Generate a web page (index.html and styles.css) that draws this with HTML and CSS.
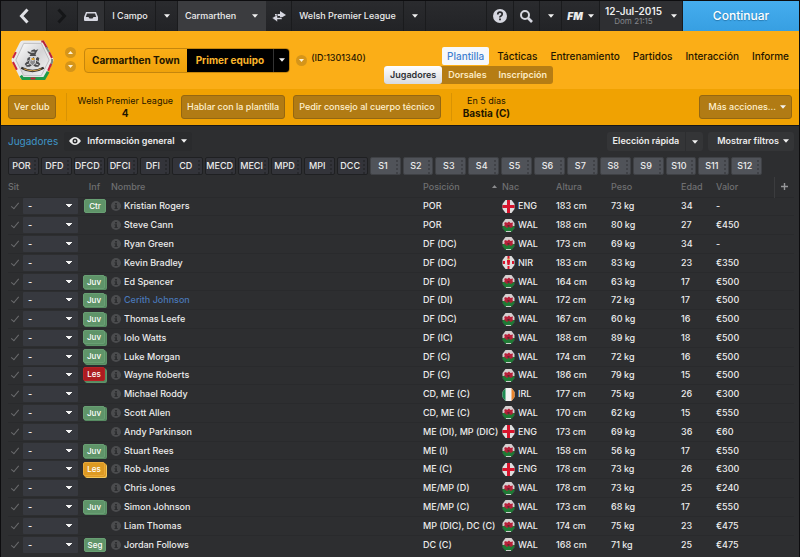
FILE: index.html
```html
<!DOCTYPE html>
<html lang="es">
<head>
    <meta charset="UTF-8">
    <meta name="viewport" content="width=device-width, initial-scale=1.0">
    <title>Carmarthen Town</title>
    <link rel="stylesheet" href="styles.css">
</head>
<body>
    <svg class="sprites" aria-hidden="true">
        <clipPath id="hex"><path d="M3.500 0h6l3 4v5l-3 4h-6l-3-4V4z"/></clipPath>
        <symbol id="caret" viewBox="0 0 7 4"><path d="M0 0h7L3.500 4z" fill="currentColor"/></symbol>
        <symbol id="info" viewBox="0 0 10 10">
            <circle cx="5" cy="5" r="5" fill="#4b4c4e"/>
            <path d="M4 2h2v1.500H4zM3.500 4.300H6V7h.7v1H3.500V7h.7V5.200h-.7z" fill="#2c2d2f"/>
        </symbol>
        <symbol id="ENG" viewBox="0 0 13 13">
            <g clip-path="url(#hex)">
                <path d="M0 0h13v13H0z" fill="#dedede"/>
                <path d="M5 0h3v5h5v3H8v5H5V8H0V5h5z" fill="#d8142c"/>
            </g>
        </symbol>
        <symbol id="NIR" viewBox="0 0 13 13">
            <g clip-path="url(#hex)">
                <path d="M0 0h13v13H0z" fill="#dedede"/>
                <path d="M5.500 0h2v3h-2zM5.500 10h2v3h-2zM1 5h2v3H1zM10 5h2v3h-2z" fill="#d8142c"/>
                <path d="M5 4h3v2l-.5 3h-2L5 6z" fill="#d8142c"/>
                <path d="M5.500 2.500h2V4h-2z" fill="#d9a441"/>
            </g>
        </symbol>
        <symbol id="WAL" viewBox="0 0 13 13">
            <g clip-path="url(#hex)">
                <path d="M0 0h13v7H0z" fill="#d5d0d0"/>
                <path d="M0 7h13v6H0z" fill="#1f7a35"/>
                <path d="M0 9l3 4H0zM13 9l-3 4h3zM4 12h5v1H4z" fill="#c9cfca"/>
                <path d="M2 4l2-1 1 1 2-1.500L8.500 4 11 3.500 10.500 6l1 2-2-.5.500 1.500-2-.5-1-1-2 1.500-1-.5.500-1-2 .5L3 7 1.500 6 3 5.500z" fill="#b81f38"/>
                <path d="M5 6.500l2-.500 1 1-2 1z" fill="#5e2330"/>
            </g>
        </symbol>
        <symbol id="IRL" viewBox="0 0 13 13">
            <g clip-path="url(#hex)">
                <path d="M0 0h13v13H0z" fill="#f2f2f2"/>
                <path d="M0 0h3.500v13H0z" fill="#1c8a50"/>
                <path d="M9.500 0H13v13H9.500z" fill="#e8842c"/>
            </g>
        </symbol>
    </svg>

    <nav class="topbar">
        <button class="cell back" aria-label="Atrás"><svg width="10" height="16" viewBox="0 0 10 16"><path d="M8.500 1.500L2.500 8l6 6.500" fill="none" stroke="#e0e1e6" stroke-width="3"/></svg></button>
        <button class="cell forward" aria-label="Adelante"><svg width="10" height="16" viewBox="0 0 10 16"><path d="M1.500 1.500l6 6.500-6 6.500" fill="none" stroke="#151618" stroke-width="3"/></svg></button>
        <button class="cell inbox" aria-label="Bandeja"><svg width="14" height="9" viewBox="0 0 14 9"><path d="M2 0h10l2 5v3q0 1-1 1H1Q0 9 0 8V5zM3 1.500L1.800 5H4.500l1 1.500h3l1-1.500h2.700L11 1.500z" fill="#d6d7e0" fill-rule="evenodd"/></svg></button>
        <a class="cell campo" href="#">I Campo</a>
        <button class="cell drop" aria-label="Menú Campo"><svg class="caret"><use href="#caret"/></svg></button>
        <a class="cell team active" href="#">Carmarthen</a>
        <button class="cell drop active" aria-label="Menú Carmarthen"><svg class="caret"><use href="#caret"/></svg></button>
        <button class="cell swap" aria-label="Cambiar"><svg width="14" height="11" viewBox="0 0 14 11"><path d="M8 0l6 4-6 3.500V5H3V3h5z" fill="#d6d7e0"/><path d="M5.500 3.500L0 7l5.500 4V8.500H10v-2H5.500z" fill="#d6d7e0" stroke="#26272a" stroke-width=".6"/></svg></button>
        <a class="cell league" href="#">Welsh Premier League</a>
        <button class="cell drop" aria-label="Menú liga"><svg class="caret"><use href="#caret"/></svg></button>
        <div class="space"></div>
        <button class="cell help" aria-label="Ayuda"><svg width="14" height="14" viewBox="0 0 14 14"><circle cx="7" cy="7" r="7" fill="#d6d7e0"/><path d="M4.800 5.400Q4.800 3.200 7 3.200t2.200 1.900Q9.200 6.300 8 7T7 8.500" fill="none" stroke="#26272a" stroke-width="1.700"/><path d="M6.100 9.600h1.800v1.700H6.100z" fill="#26272a"/></svg></button>
        <button class="cell search" aria-label="Buscar"><svg width="13" height="13" viewBox="0 0 13 13"><circle cx="5" cy="5" r="4" fill="none" stroke="#d6d7e0" stroke-width="2"/><path d="M8 8l4 4" stroke="#d6d7e0" stroke-width="2.600"/></svg></button>
        <button class="cell drop" aria-label="Opciones de búsqueda"><svg class="caret"><use href="#caret"/></svg></button>
        <button class="cell fm"><b>FM</b><svg class="caret"><use href="#caret"/></svg></button>
        <button class="cell date"><span><strong>12-Jul-2015</strong><small>Dom 21:15</small></span><svg class="caret"><use href="#caret"/></svg></button>
        <button class="continue">Continuar</button>
    </nav>

    <header class="club">
        <svg class="crest" viewBox="0 0 44 42" role="img" aria-label="Escudo">
            <defs>
                <linearGradient id="silver" x1="0" y1="0" x2="1" y2="1">
                    <stop offset="0" stop-color="#fff"/><stop offset=".5" stop-color="#d4d4d6"/><stop offset="1" stop-color="#f6f6f6"/>
                </linearGradient>
            </defs>
            <path d="M12 1h20q2 0 3 2l8 16q1 2 0 4l-8 16q-1 2-3 2H12q-2 0-3-2L1 23q-1-2 0-4L9 3q1-2 3-2z" fill="#e9e9ea"/>
            <path d="M31 2h2l4 7M39 13l3 6" stroke="#b5213a" stroke-width="2" fill="none"/>
            <path d="M36 8l3 5M42 20v3l-2 5" stroke="#7d8a7f" stroke-width="2" fill="none"/>
            <path d="M38 33l-4 7H12l-2-3" stroke="#1f9a4a" stroke-width="3" fill="none"/>
            <path d="M38 32l3-7M20 40h5M2 23l4 8M2 19l3-6" stroke="#c8233c" stroke-width="2" fill="none"/>
            <path d="M13 4h18l8 17-8 16H13L5 21z" fill="url(#silver)" stroke="#bdbdbf"/>
            <path d="M17 12l3 1 1-2 3-1 1 1 3-1-2 3-1 3 1 1h-7l1-2-2-1-1-1z" fill="#4b4b4d"/>
            <path d="M17 19l2-1 2 2 2-2 2 2 2-2 2 1-1 4 2 2-2 3h-3l-3-2-3 2h-3l-2-3 2-2z" fill="#4a4a4d"/>
            <path d="M20 19l2 3 3-3v5l-3 3-3-3zM16 23l2-2M28 23l-2-2M20 13h4M16 26l3-1M28 26l-3-1" stroke="#e5e5e5" fill="#8b8b8e"/>
            <path d="M21 19h3v2h-3z" fill="#e2a32c"/>
            <path d="M11 28q11 6 22 0l1 2q-12 7-24 0z" fill="#2e2d2b"/>
            <path d="M13 30q9 4 18 0" stroke="#d6a046" fill="none"/>
        </svg>
        <div class="steppers">
            <button aria-label="Equipo anterior"><svg class="up"><use href="#caret"/></svg></button>
            <button aria-label="Equipo siguiente"><svg><use href="#caret"/></svg></button>
        </div>
        <div class="title">
            <h1>Carmarthen Town</h1>
            <button class="squad">Primer equipo</button>
            <button class="squad-menu" aria-label="Elegir equipo"><svg class="caret"><use href="#caret"/></svg></button>
        </div>
        <div class="steppers single"><button aria-label="Más"><svg><use href="#caret"/></svg></button></div>
        <span class="club-id">(ID:1301340)</span>
        <div class="menus">
            <nav class="tabs">
                <a class="selected" href="#">Plantilla</a>
                <a href="#">Tácticas</a>
                <a href="#">Entrenamiento</a>
                <a href="#">Partidos</a>
                <a href="#">Interacción</a>
                <a href="#">Informe</a>
            </nav>
            <nav class="subtabs">
                <a class="selected" href="#">Jugadores</a>
                <a href="#">Dorsales</a>
                <a href="#">Inscripción</a>
            </nav>
        </div>
    </header>

    <section class="actions">
        <button>Ver club</button>
        <div class="fact"><span>Welsh Premier League</span><strong>4</strong></div>
        <button>Hablar con la plantilla</button>
        <button>Pedir consejo al cuerpo técnico</button>
        <div class="fact"><span>En 5 días</span><strong>Bastia (C)</strong></div>
        <button class="more">Más acciones...<svg class="caret"><use href="#caret"/></svg></button>
    </section>

    <main>
        <div class="toolbar">
            <h2>Jugadores</h2>
            <button class="view">
                <svg width="12" height="8" viewBox="0 0 12 8"><path d="M0 4q6-8 12 0-6 8-12 0z" fill="#ececec"/><circle cx="6" cy="4" r="2.500" fill="#2b2c2e"/><circle cx="6" cy="4" r="1" fill="#ececec"/></svg>
                Información general
                <svg class="caret"><use href="#caret"/></svg>
            </button>
            <div class="quick">
                <button>Elección rápida</button>
                <button class="quick-menu" aria-label="Opciones de elección"><svg class="caret"><use href="#caret"/></svg></button>
            </div>
            <button class="filters">Mostrar filtros<svg class="caret"><use href="#caret"/></svg></button>
        </div>

        <div class="slots" id="slots"></div>

        <table>
            <colgroup>
                <col class="c-tick"><col class="c-pick"><col class="c-inf"><col><col class="c-pos"><col class="c-nac">
                <col class="c-height"><col class="c-weight"><col class="c-age"><col class="c-value"><col class="c-add">
            </colgroup>
            <thead>
                <tr>
                    <th colspan="2">Sit</th>
                    <th class="inf">Inf</th>
                    <th>Nombre</th>
                    <th class="sorted"><div>Posición<svg class="up"><use href="#caret"/></svg></div></th>
                    <th>Nac</th>
                    <th>Altura</th>
                    <th>Peso</th>
                    <th>Edad</th>
                    <th>Valor</th>
                    <th class="add"><button aria-label="Añadir columna"><svg width="7" height="7" viewBox="0 0 7 7"><path d="M3.500 0v7M0 3.500h7" stroke="#97989a" stroke-width="1.400"/></svg></button></th>
                </tr>
            </thead>
            <tbody id="players"></tbody>
        </table>
    </main>

    <script>
        const positions = ['POR', 'DFD', 'DFCD', 'DFCI', 'DFI', 'CD', 'MECD', 'MECI', 'MPD', 'MPI', 'DCC'];
        const subs = ['S1', 'S2', 'S3', 'S4', 'S5', 'S6', 'S7', 'S8', 'S9', 'S10', 'S11', 'S12'];

        // badge text, badge classes, name, position, nation, height, weight, age, value
        const players = [
            ['Ctr', '', 'Kristian Rogers', 'POR', 'ENG', 183, 73, 34, '-'],
            ['', '', 'Steve Cann', 'POR', 'WAL', 188, 80, 27, '€450'],
            ['', '', 'Ryan Green', 'DF (DC)', 'WAL', 173, 69, 34, '-'],
            ['', '', 'Kevin Bradley', 'DF (DC)', 'NIR', 183, 83, 23, '€350'],
            ['Juv', 'double', 'Ed Spencer', 'DF (D)', 'WAL', 164, 63, 17, '€500'],
            ['Juv', 'double', 'Cerith Johnson', 'DF (DI)', 'WAL', 172, 72, 17, '€500'],
            ['Juv', 'double', 'Thomas Leefe', 'DF (DC)', 'WAL', 167, 60, 16, '€500'],
            ['Juv', 'triple', 'Iolo Watts', 'DF (IC)', 'WAL', 188, 89, 18, '€500'],
            ['Juv', 'triple', 'Luke Morgan', 'DF (C)', 'WAL', 174, 72, 16, '€500'],
            ['Les', 'triple red', 'Wayne Roberts', 'DF (C)', 'WAL', 186, 79, 15, '€500'],
            ['', '', 'Michael Roddy', 'CD, ME (C)', 'IRL', 177, 75, 26, '€300'],
            ['Juv', 'double', 'Scott Allen', 'CD, ME (C)', 'WAL', 170, 62, 15, '€550'],
            ['', '', 'Andy Parkinson', 'ME (DI), MP (DIC)', 'ENG', 173, 69, 36, '€60'],
            ['Juv', 'double', 'Stuart Rees', 'ME (I)', 'WAL', 158, 56, 17, '€550'],
            ['Les', 'double amber', 'Rob Jones', 'ME (C)', 'ENG', 178, 73, 26, '€300'],
            ['', '', 'Chris Jones', 'ME/MP (D)', 'WAL', 178, 73, 25, '€240'],
            ['Juv', 'double', 'Simon Johnson', 'ME/MP (C)', 'WAL', 173, 68, 17, '€550'],
            ['', '', 'Liam Thomas', 'MP (DIC), DC (C)', 'WAL', 174, 75, 23, '€475'],
            ['Seg', '', 'Jordan Follows', 'DC (C)', 'WAL', 168, 71, 25, '€475']
        ];

        document.getElementById('slots').innerHTML =
            positions.map(p => `<button>${p}</button>`).join('') +
            subs.map(s => `<button class="sub">${s}</button>`).join('');

        document.getElementById('players').innerHTML = players.map(([badge, kind, name, pos, nat, height, weight, age, value]) => `
            <tr>
                <td><input class="tick" type="checkbox" aria-label="Seleccionar a ${name}"></td>
                <td><select aria-label="Puesto de ${name}"><option>-</option></select></td>
                <td>${badge ? `<span class="badge ${kind}">${badge}</span>` : ''}</td>
                <td><a href="#" class="player${name === 'Cerith Johnson' ? ' current' : ''}"><svg class="info"><use href="#info"/></svg>${name}</a></td>
                <td>${pos}</td>
                <td><span class="nation"><svg><use href="#${nat}"/></svg>${nat}</span></td>
                <td>${height} cm</td>
                <td>${weight} kg</td>
                <td>${age}</td>
                <td>${value}</td>
                <td></td>
            </tr>`).join('');
    </script>
</body>
</html>
```

FILE: styles.css
```css
* {
    box-sizing: border-box;
}
body {
    margin: 0;
    border: 1px solid #0d0d0f;
    border-bottom: 0;
    background-color: #2d2e30;
    color: #ececec;
    font-family: Inter, "Liberation Sans", sans-serif;
    font-size: 9px;
    line-height: 12px;
}
button, select {
    margin: 0;
    padding: 0;
    border: 0;
    background: none;
    color: inherit;
    font: inherit;
    white-space: nowrap;
}
a {
    color: inherit;
    text-decoration: none;
}
h1, h2 {
    margin: 0;
    font-size: 10px;
}
svg {
    flex: none;
}
.sprites {
    position: absolute;
    width: 0;
    height: 0;
}
.caret {
    width: 6px;
    height: 4px;
    color: #f2f2f2;
}
.up {
    transform: rotate(180deg);
}

/* top bar */
.topbar {
    display: flex;
    height: 30px;
    background: linear-gradient(#2a2b2e, #222326);
    font-weight: 500;
}
.cell {
    display: flex;
    align-items: center;
    justify-content: center;
    border-right: 1px solid #1a1b1d;
    white-space: nowrap;
}
.back {
    width: 46px;
    background-color: #2d2e31;
}
.forward {
    width: 31px;
}
.inbox {
    width: 27px;
    background-color: #303134;
}
.campo {
    width: 51px;
}
.drop {
    width: 22px;
}
.team {
    width: 66px;
}
.active {
    background-color: #3b3c3f;
    border-color: #3b3c3f;
}
.swap {
    width: 26px;
}
.league {
    width: 112px;
}
.space {
    flex: 1;
}
.help {
    width: 28px;
    border-left: 1px solid #1a1b1d;
}
.search {
    width: 26px;
}
.fm {
    width: 38px;
    gap: 5px;
    font-style: italic;
}
.fm b {
    font-size: 10px;
    font-weight: 900;
}
.date {
    width: 83px;
    gap: 9px;
    background-color: #2e2f32;
}
.date strong, .date small {
    display: block;
    line-height: 10px;
}
.date strong {
    font-size: 10px;
    font-weight: 600;
}
.date small {
    font-size: 8px;
    font-weight: 400;
    color: #85868a;
}
.continue {
    width: 116px;
    background: linear-gradient(#45adee, #379fe2);
    color: #fff;
    font-size: 12px;
    font-weight: 500;
    text-shadow: 0 1px 1px #2779b0;
}

/* club header */
.club {
    display: flex;
    align-items: center;
    height: 58px;
    padding: 0 5px 0 10px;
    background-color: #fbae17;
    color: #1f1600;
}
.crest {
    width: 43px;
    height: 42px;
}
.steppers {
    display: flex;
    flex-direction: column;
    gap: 3px;
    margin: 0 8px 0 11px;
    padding-bottom: 2px;
}
.steppers button {
    display: flex;
    align-items: center;
    justify-content: center;
    width: 11px;
    height: 11px;
    border-radius: 50%;
    background-color: #d5951a;
}
.steppers svg {
    width: 5px;
    height: 3px;
    color: #fff3d5;
}
.steppers.single {
    margin: 0 4px 0 6px;
    padding: 0;
}
.title {
    display: flex;
    height: 25px;
    border: 1px solid #c5860d;
    border-radius: 4px;
    overflow: hidden;
    background: linear-gradient(#fbae17, #efa20b);
}
.title h1 {
    padding: 0 7px;
    font-weight: 700;
    line-height: 23px;
}
.squad {
    padding: 0 9px;
    background-color: #000;
    color: #fbb62c;
    font-size: 10px;
    font-weight: 700;
}
.squad-menu {
    display: flex;
    align-items: center;
    justify-content: center;
    width: 16px;
    border-left: 1px solid #333;
    background-color: #000;
}
.club-id {
    padding-bottom: 4px;
    font-weight: 500;
}
.menus {
    margin-left: auto;
    padding-top: 10px;
}
.tabs, .subtabs {
    display: flex;
    line-height: 18px;
}
.tabs {
    gap: 3px;
    font-size: 10px;
    font-weight: 500;
}
.tabs a {
    padding: 0 5px;
}
.tabs .selected {
    border-radius: 2px;
    background-color: #f6f8fb;
    color: #3f7fd0;
}
.subtabs {
    width: max-content;
    margin-top: 1px;
    margin-left: -58px;
    border-radius: 3px;
    background-color: #b67d14;
    color: #fdebc4;
    font-weight: 600;
}
.subtabs a {
    padding: 0 6px;
}
.subtabs .selected {
    border-radius: 3px;
    background: linear-gradient(#fff, #d9dbe0);
    color: #2e3034;
}

/* actions */
.actions {
    display: flex;
    align-items: center;
    gap: 8px;
    height: 37px;
    padding: 0 7px;
    border-bottom: 1px solid #17181a;
    background-color: #f0a202;
    color: #1f1600;
}
.actions button {
    height: 24px;
    padding: 0 5px;
    border: 1px solid #946712;
    border-radius: 3px;
    background-color: #b17b14;
    color: #fff0cf;
    font-weight: 500;
}
.fact {
    margin-left: 2px;
    padding: 2px 0 2px 11px;
    border-left: 1px solid #d99303;
    text-align: center;
    font-weight: 400;
}
.fact span, .fact strong {
    display: block;
}
.fact strong {
    font-size: 10px;
}
.actions .more {
    display: flex;
    align-items: center;
    gap: 4px;
    margin-left: auto;
    padding-left: 8px;
}

/* toolbar */
main {
    padding: 5px 5px 3px 7px;
}
.toolbar {
    display: flex;
    align-items: center;
    height: 20px;
    font-weight: 600;
}
.toolbar h2 {
    color: #3f95c8;
    font-weight: 400;
}
.toolbar button {
    height: 19px;
    background-color: #343537;
}
.view, .filters {
    display: flex;
    align-items: center;
    border-radius: 3px;
}
.toolbar .view {
    gap: 6px;
    margin-left: 6px;
    padding: 0 5px;
    background-color: #2a2b2d;
}
.quick {
    display: flex;
    gap: 1px;
    margin-left: auto;
    border-radius: 3px;
    overflow: hidden;
}
.quick button {
    padding: 0 6px;
}
.quick .quick-menu {
    width: 17px;
    padding: 0;
}
.filters {
    gap: 4px;
    margin-left: 5px;
    padding: 0 5px 0 9px;
}
.slots {
    display: flex;
    gap: 2px;
    margin-top: 6px;
    margin-right: 32px;
}
.slots button {
    flex: 1 1 0;
    min-width: 0;
    height: 18px;
    padding-right: 4px;
    border: 1px solid #1f2022;
    border-radius: 2px;
    background: radial-gradient(circle at 1px 1px, #28292d 1px, transparent 1px) right 0 top 2px / 4px 4px repeat-y #33343a;
    font-weight: 500;
}
.slots .sub {
    border-color: #3f4145;
    background: radial-gradient(circle at 1px 1px, #404247 1px, transparent 1px) right 0 top 2px / 4px 4px repeat-y #505359;
}

/* player table */
table {
    width: 100%;
    height: calc(100vh - 180px);
    margin-top: 2px;
    border-collapse: collapse;
    table-layout: fixed;
}
th, td {
    padding: 0;
    text-align: left;
    white-space: nowrap;
    font-weight: 500;
}
th {
    height: 20px;
    color: #6f7072;
}
td {
    height: 18px;
}
tbody tr {
    border-top: 1px solid #292a2c;
}
.c-tick { width: 15px; }
.c-pick { width: 60px; }
.c-inf { width: 28px; }
.c-pos { width: 79px; }
.c-nac { width: 54px; }
.c-height { width: 55px; }
.c-weight { width: 70px; }
.c-age { width: 35px; }
.c-value { width: 58px; }
.c-add { width: 20px; }
.inf {
    padding-right: 5px;
    text-align: center;
}
.sorted div {
    display: flex;
    align-items: center;
    justify-content: space-between;
    padding-right: 5px;
}
.sorted svg {
    width: 5px;
    height: 3px;
    color: #8b8c8e;
}
.add {
    border-left: 1px solid #3b3c3e;
    text-align: center;
}
.tick {
    display: block;
    appearance: none;
    width: 4px;
    height: 8px;
    margin: 0 0 2px 5px;
    border: solid #6a6b6d;
    border-width: 0 1px 1px 0;
    transform: rotate(40deg);
}
select {
    display: block;
    appearance: none;
    width: 55px;
    height: 16px;
    padding: 0 5px;
    border-radius: 1px;
    background-color: #37393f;
    background-image: linear-gradient(to bottom left, #f2f2f2 50%, transparent 50%), linear-gradient(to bottom right, #f2f2f2 50%, transparent 50%);
    background-position: right 9px center, right 6px center;
    background-size: 3px 4px;
    background-repeat: no-repeat;
    font-weight: 600;
}
.badge {
    display: block;
    width: 22px;
    height: 14px;
    margin-left: 1px;
    border: 1px solid #689f73;
    border-radius: 2px;
    background-color: #5f9469;
    color: #fff;
    font-size: 8px;
    line-height: 12px;
    text-align: center;
}
.double {
    margin-left: 0;
    box-shadow: 1px 1px #568a61, 2px 1px #5f9469;
}
.triple {
    margin: 0 0 2px;
    box-shadow: 1px 1px #568a61, 2px 2px #5f9469;
}
.red {
    border-color: #b82226;
    background-color: #ad1c20;
}
.amber {
    border-color: #e9a93a;
    background-color: #dd9a23;
    box-shadow: 1px 1px #dd9a23, 2px 2px #f1c75c;
}
.player, .nation {
    display: flex;
    align-items: center;
}
.player {
    gap: 3px;
}
.current {
    color: #4a78b8;
}
.info {
    width: 10px;
    height: 10px;
}
.nation {
    gap: 3px;
}
.nation svg {
    width: 13px;
    height: 13px;
}
```
